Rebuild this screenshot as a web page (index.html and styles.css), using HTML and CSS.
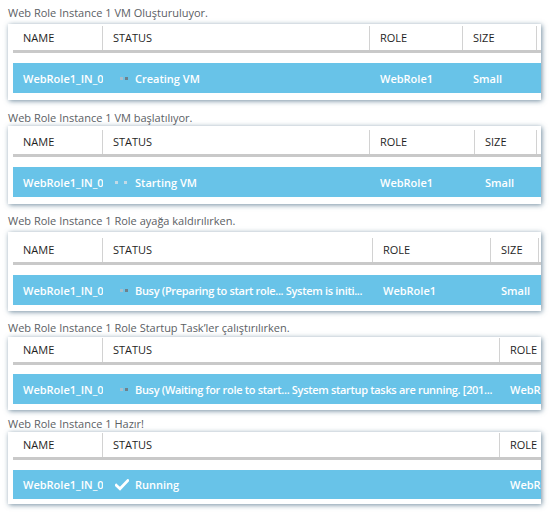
FILE: index.html
```html
<!DOCTYPE html>
<html lang="tr">
<head>
<meta charset="utf-8">
<title>Web Role Instance</title>
<link rel="stylesheet" href="styles.css">
</head>
<body>
<main class="steps">

  <section class="step s1">
    <p class="caption">Web Role Instance 1 VM Oluşturuluyor.</p>
    <div class="panel">
      <div class="grid cols-a thead">
        <div class="th">NAME</div>
        <div class="th">STATUS</div>
        <div class="th">ROLE</div>
        <div class="th">SIZE</div>
        <div class="th last"></div>
      </div>
      <div class="rule"></div>
      <div class="grid cols-a trow">
        <div class="td">WebRole1_IN_0</div>
        <div class="td status"><span class="icon spin"><i class="sq light"></i><i class="sq dark"></i></span>Creating VM</div>
        <div class="td">WebRole1</div>
        <div class="td">Small</div>
        <div class="td"></div>
      </div>
    </div>
  </section>

  <section class="step s2">
    <p class="caption">Web Role Instance 1 VM başlatılıyor.</p>
    <div class="panel">
      <div class="grid cols-b thead">
        <div class="th">NAME</div>
        <div class="th">STATUS</div>
        <div class="th">ROLE</div>
        <div class="th">SIZE</div>
        <div class="th last"></div>
      </div>
      <div class="rule"></div>
      <div class="grid cols-b trow">
        <div class="td">WebRole1_IN_0</div>
        <div class="td status"><span class="icon spin spread"><i class="sq pale"></i><i class="sq pale"></i></span>Starting VM</div>
        <div class="td">WebRole1</div>
        <div class="td">Small</div>
        <div class="td"></div>
      </div>
    </div>
  </section>

  <section class="step s3">
    <p class="caption">Web Role Instance 1 Role ayağa kaldırılırken.</p>
    <div class="panel">
      <div class="grid cols-c thead">
        <div class="th">NAME</div>
        <div class="th">STATUS</div>
        <div class="th">ROLE</div>
        <div class="th">SIZE</div>
        <div class="th last"></div>
      </div>
      <div class="rule"></div>
      <div class="grid cols-c trow">
        <div class="td">WebRole1_IN_0</div>
        <div class="td status"><span class="icon spin"><i class="sq light"></i><i class="sq dark"></i></span><span class="long">Busy (Preparing to start role... System is initi...</span></div>
        <div class="td">WebRole1</div>
        <div class="td">Small</div>
        <div class="td"></div>
      </div>
    </div>
  </section>

  <section class="step s4">
    <p class="caption">Web Role Instance 1 Role Startup Task’ler çalıştırılırken.</p>
    <div class="panel">
      <div class="grid cols-d thead">
        <div class="th">NAME</div>
        <div class="th">STATUS</div>
        <div class="th last">ROLE</div>
      </div>
      <div class="rule"></div>
      <div class="grid cols-d trow">
        <div class="td">WebRole1_IN_0</div>
        <div class="td status"><span class="icon spin"><i class="sq light"></i><i class="sq dark"></i></span><span class="long">Busy (Waiting for role to start... System startup tasks are running. [201...</span></div>
        <div class="td">WebRole1</div>
      </div>
    </div>
  </section>

  <section class="step s5">
    <p class="caption">Web Role Instance 1 Hazır!</p>
    <div class="panel">
      <div class="grid cols-d thead">
        <div class="th">NAME</div>
        <div class="th">STATUS</div>
        <div class="th last">ROLE</div>
      </div>
      <div class="rule"></div>
      <div class="grid cols-d trow">
        <div class="td">WebRole1_IN_0</div>
        <div class="td status"><span class="icon check"><svg width="14" height="12" viewBox="0 0 14 12"><path d="M1.2 6.2 L5 9.8 L12.8 1.6" fill="none" stroke="#ffffff" stroke-width="2.8" stroke-linecap="square"/></svg></span>Running</div>
        <div class="td">WebRole1</div>
      </div>
    </div>
  </section>

</main>
</body>
</html>
```

FILE: styles.css
```css
* { box-sizing: border-box; }

html, body {
  margin: 0;
  padding: 0;
  background: #ffffff;
}

body {
  font-family: "Open Sans", "Noto Sans", "Liberation Sans", sans-serif;
  font-size: 11px;
  padding-top: 5px;
  width: 554px;
  height: 520px;
  overflow: hidden;
}

.steps {
  display: flex;
  flex-direction: column;
}

.caption {
  margin: 0;
  height: 16px;
  line-height: 16px;
  padding-left: 8px;
  color: #5b6064;
  font-weight: 400;
  white-space: nowrap;
}

.panel {
  margin-left: 8px;
  width: 533px;
  background: #ffffff;
  padding-left: 5px;
  overflow: hidden;
  box-shadow: 1px 1px 5px rgba(70, 105, 130, 0.75);
}

.grid {
  display: grid;
}

.cols-a { grid-template-columns: 90px 267px 93px 74px 1fr; }
.cols-b { grid-template-columns: 90px 267px 105px 62px 1fr; }
.cols-c { grid-template-columns: 90px 270px 118px 48px 1fr; }
.cols-d { grid-template-columns: 90px 397px 1fr; }

.th {
  height: 24px;
  line-height: 24px;
  padding-left: 10px;
  color: #1f1f1f;
  border-right: 1px solid #d2d2d2;
  white-space: nowrap;
  overflow: hidden;
}

.th.last { border-right: none; }

.rule {
  height: 3px;
  background: #c9c9c9;
}

.trow {
  margin-top: 10px;
  height: 30px;
  background: #68c3e8;
  align-items: center;
}

.td {
  padding-left: 10px;
  color: #ffffff;
  font-weight: 600;
  white-space: nowrap;
  overflow: hidden;
}

.td.status {
  display: flex;
  align-items: center;
  padding-left: 12px;
}

.icon {
  flex: none;
  width: 14px;
  height: 12px;
  margin-right: 6px;
  display: flex;
  align-items: center;
}

.spin {
  gap: 2px;
  padding-left: 5px;
}

.spin.spread {
  gap: 6px;
  padding-left: 0;
}

.sq {
  display: block;
  width: 3px;
  height: 3px;
}

.sq.light { background: #a7bfcd; }
.sq.dark { background: #6d818d; }
.sq.pale { background: #c2dae7; }

.check svg { display: block; }

.long {
  letter-spacing: -0.32px;
}

/* per-step spacing (screens were captured separately) */
.s1 .caption { margin-bottom: 3px; }
.s1 .thead { padding-top: 2px; }
.s1 .panel { padding-bottom: 7px; }

.s2 { margin-top: 10px; }
.s2 .thead { padding-top: 4px; }
.s2 .panel { padding-bottom: 7px; }

.s3 { margin-top: 9px; }
.s3 .caption { margin-bottom: 3px; }
.s3 .thead { padding-top: 6px; }
.s3 .panel { padding-bottom: 6px; }

.s4 { margin-top: 9px; }
.s4 .caption { margin-bottom: 1px; }
.s4 .thead { padding-top: 1px; }
.s4 .trow { margin-top: 9px; }
.s4 .panel { padding-bottom: 6px; }

.s5 { margin-top: 6px; }
.s5 .thead { padding-top: 1px; }
.s5 .trow { height: 29px; }
.s5 .panel { padding-bottom: 5px; }
```
